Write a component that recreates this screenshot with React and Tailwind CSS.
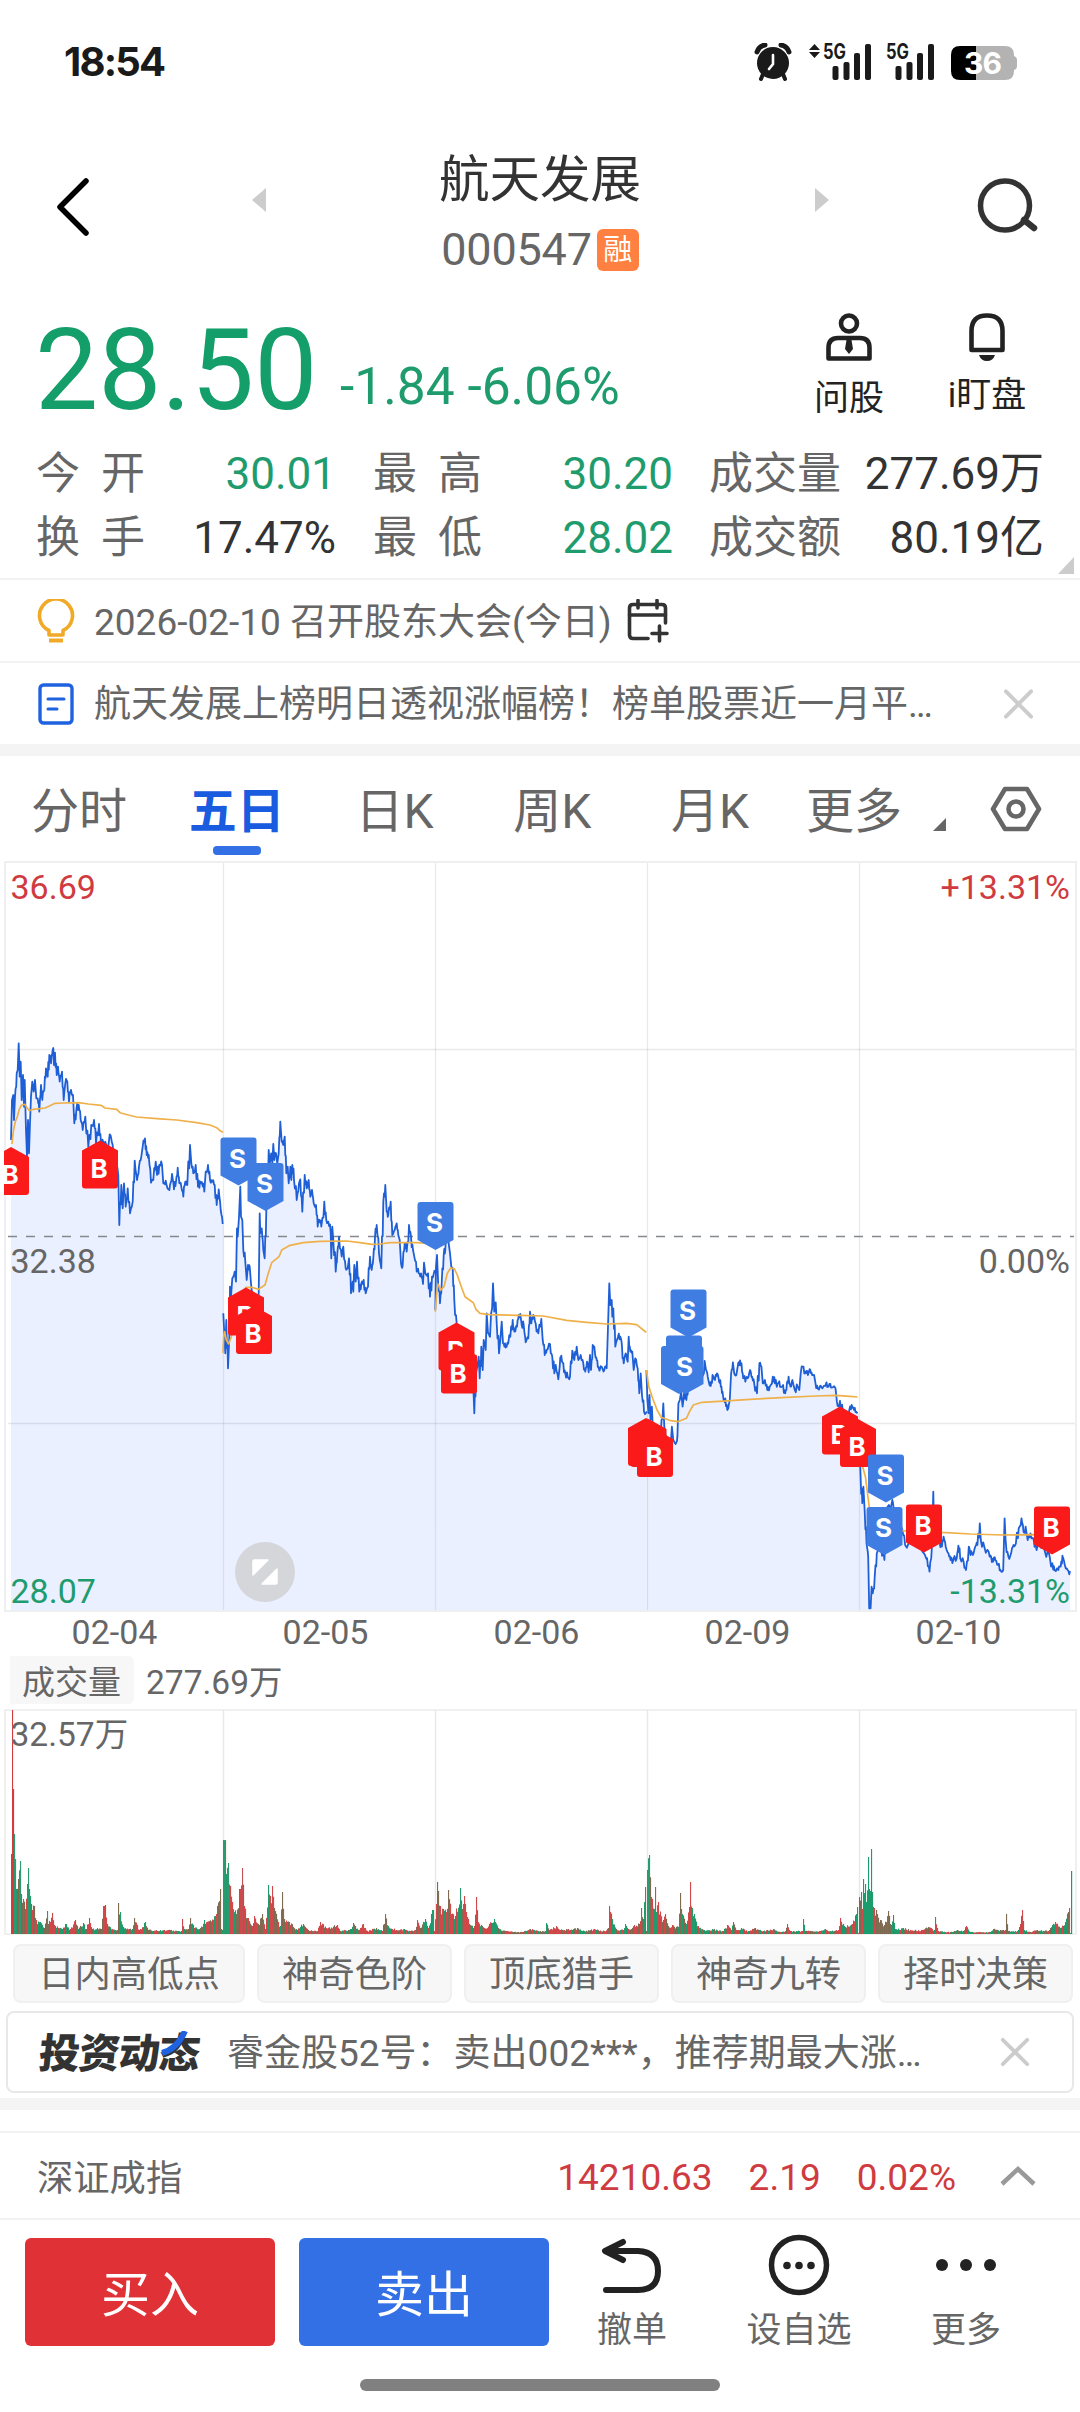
import React from 'react';

const GRID_X = [223.5, 435.5, 647.5, 859.5];

// Points are kept as "x,y" strings in magnified units, the origin is in chart px
const scaled = (str, ox, oy, kx = 3) =>
  str.trim().split(/\s+/).map((pair) => {
    const [x, y] = pair.split(',').map(Number);
    return [ox + x / kx, oy + y / 3];
  });

const PRICE = [
  scaled(
    `33,360 36,240 40,225 42,300 45,230 50,160 53,150 56,70 59,170 62,125 65,240 69,165 72,260 74,180 78,330 81,410
    84,300 87,400 90,310 93,230 97,185 101,215 105,180 109,235 113,235 118,275 123,195 127,240 133,210 138,145 143,170
    148,105 153,130 158,90 160,84 162,135 165,98 170,165 174,140 179,185 186,155 191,240 196,190 202,185 207,245
    213,210 219,225 223,310 229,270 236,255 242,300 248,330 256,290 265,380 274,315 282,300 288,370 297,312 303,370
    316,365 325,380 329,343 338,375 346,440 355,465 358,615 364,495 368,565 372,490 377,560 383,505 390,580 398,545
    404,422 411,480 417,440 424,410 428,380 435,355 440,405 446,405 453,488 460,480 467,425 471,465 478,435 486,435
    490,490 497,482 504,507 510,495 516,462 522,508 528,485 533,443 538,490 544,500 550,530 556,485 562,495 570,375
    574,430 580,460 587,435 594,500 600,485 606,487 613,515 617,455 624,435 630,480 637,485 644,495 650,555 656,508
    662,570 668,612`,
    0, 1020
  ),
  [
    ...scaled(
      `670,880 673,940 676,1000 679,900 684,1045 688,950 690,800 693,830 697,775 704,755 708,785 711,625 713,650
      717,590 721,500 723,590 727,600 730,690 736,725 740,780 744,735 749,740 753,790 758,830 768,870 776,820 779,580
      781,640 785,625 790,690 794,715 799,570 803,520 806,390 809,430 814,400 817,430 820,372 823,420 828,400 832,430
      836,400 841,305 845,365 850,375 854,350 859,460 863,440 866,490 871,440 874,480 877,435 882,480 890,540 897,490
      901,478 907,575 914,465 920,505 926,480 931,530 936,510 941,550 948,555 953,620 958,600 964,620 973,545 979,600
      985,605 992,640 994,715 997,620 1000,660 1007,755 1012,700 1017,650`,
      0, 1020
    ),
    ...scaled(
      `5,350 10,320 17,385 23,385 27,355 33,460 38,425 40,455 43,375 47,425 51,365 58,455 64,430 71,420 77,460 84,440
      90,350 95,390 100,355 105,290 110,255 117,340 124,385 130,185 136,135 140,215 145,225 152,185 157,285 164,270
      170,250 175,285 179,300 183,370 188,375 194,310 200,335 207,255 213,290 219,330 223,350 230,395 236,400 243,400
      249,432 252,368 256,400 264,400 270,470 276,410 284,390`,
      340, 1140
    ),
  ],
  scaled(
    `286,510 288,380 291,345 295,440 300,490 305,430 311,345 316,330 320,240 326,310 330,340 334,380 338,385 343,480
    350,550 360,640 375,690 390,700 400,740 403,820 408,700 412,680 416,650 419,715 424,620 428,690 431,600 437,630
    440,520 444,580 450,590 459,430 463,515 467,487 470,550 477,640 481,600 485,545 489,610 495,610 500,620 506,600
    511,590 518,540 523,575 531,560 536,525 541,522 545,555 551,555 557,607 565,595 570,515 574,550 580,525 587,550
    595,580 604,537 608,600 614,645 620,630 630,612 637,650 643,700 647,675 655,718 659,680 664,647 670,670 676,700
    683,710 690,710 697,632 703,660 710,620 715,660 722,645 730,670 736,695 741,665 746,697 750,645 753,690 758,615
    765,640 770,660 775,680 785,680 793,690 800,685 804,560 808,430 811,495 815,480 817,530 820,505 826,620 834,590
    841,590 846,620 851,670 857,640 863,665 866,590 871,635 877,635 881,690 886,655 893,685 898,760 902,700 906,765
    912,815 921,815`,
    340, 1140
  ),
  scaled(
    `309,510 312,600 315,640 318,585 321,660 325,620 329,720 339,760 350,720 358,610 361,680 373,760 383,680 387,720
    394,732 399,710 402,610 406,600 410,575 414,620 419,570 425,600 430,560 450,540 476,520 478,483 482,510 487,530
    491,550 496,558 501,525 508,540 514,520 520,545 525,560 530,575 533,600 538,595 544,630 551,600 555,520 560,487
    564,520 570,525 574,500 579,495 585,490 590,535 596,545 603,535 610,510 616,530 622,550 630,580 637,490 643,500
    647,550 653,540 660,570 667,560 676,530 682,550 690,550 697,560 706,555 712,580 717,550 722,530 727,560 733,540
    740,570 748,560 753,570 757,520 765,500 772,520 778,525 785,510 790,525 796,525 800,550 806,565 812,560 820,565
    832,547 838,560 845,563 858,565 862,605 868,620 871,603 880,640 890,655 898,630 905,615 912,630 918,635 922,640`,
    540, 1200, 2.9037
  ),
  scaled(
    `927,700 931,830 936,910 939,860 943,940 948,1030 953,1070 956,1225 960,1225 963,1160 966,1180 972,1130 978,1060
    990,1040 1000,1080 1005,1000 1009,920 1013,915 1018,920 1023,900 1028,930 1040,980 1052,990 1060,1035 1075,1030
    1090,1010 1105,1030 1118,1065 1124,1075 1131,1115 1138,1040 1142,875 1144,980 1150,1010 1160,1020 1167,1040
    1172,1010 1178,1040 1186,1060 1192,1080 1200,1080 1210,1075 1215,1037 1220,1075 1230,1085 1237,1110 1245,1040
    1250,1065 1257,1065 1264,1040 1270,1035 1277,970 1280,1020 1290,1040 1303,1055 1310,1070 1316,1085 1322,1080
    1330,1095 1337,1110 1345,1110 1349,955 1352,1020 1360,1070 1368,1060 1375,1035 1382,1030 1390,985 1398,955
    1404,995 1410,980 1416,1020 1424,1000 1433,1015 1442,1050 1450,1030 1465,1050 1480,1070 1484,1100 1488,1090
    1494,1110 1505,1110 1512,1100 1517,1067 1524,1095 1532,1110 1539,1113`,
    540, 1200, 2.9037
  ),
];

const AVERAGE = [
  scaled(
    `36,372 40,335 46,305 52,290 58,268 64,256 74,253 80,262 88,272 100,268 120,266 135,264 150,257 165,250 190,249
    235,248 265,252 303,256 315,264 350,268 360,278 385,285 410,291 470,296 530,300 590,308 630,315 650,323 660,332 669,337`,
    0, 1020
  ),
  scaled(
    `669,1000 671,950 674,935 679,960 686,972 694,950 705,900 720,830 738,802 755,802 775,808 795,795 805,760 815,728
    837,710 845,690 870,676 910,668 960,664 1040,663 1080,668 1115,673 1140,672 1170,668 1250,668 1304,672`,
    0, 1020
  ),
  scaled(
    `286,515 290,460 294,432 302,450 312,440 322,400 332,384 343,386 352,405 362,435 375,470 400,488 408,508 420,520
    450,524 540,526 610,528 680,541 740,547 800,552 860,550 890,554 910,570 919,577`,
    340, 1140
  ),
  scaled(
    `309,510 316,560 327,595 340,630 352,652 380,662 400,665 425,655 434,635 445,615 470,607 520,604 610,598 700,593
    800,588 860,586 900,589 922,591`,
    540, 1200, 2.9037
  ),
  scaled(
    `925,780 937,800 945,830 956,920 975,960 1010,980 1055,993 1115,990 1167,997 1250,1002 1345,1005 1433,1004 1539,1008`,
    540, 1200, 2.9037
  ),
];

// x,height pairs of the volume outline
const VOLUME = `11,80 12,224 13,145 14,100 15,75 16,45 18,55 20,73 21,40 23,35 25,25 27,50 28,66 29,45 31,30 34,28 36,14
  40,12 44,6 47,23 48,10 52,21 55,8 62,5 65,10 70,5 75,14 78,5 83,11 86,5 89,16 92,5 97,6 101,5 103,28 105,29 107,10
  112,5 117,4 118,31 120,22 123,7 132,5 134,16 139,4 145,12 148,4 160,4 170,4 178,3 181,3 182,15 184,5 188,5 190,16
  194,6 202,7 204,14 209,13 215,18 217,28 219,33 220,45 221,5 222,4 223,94 225,94 226,60 228,71 230,48 232,32 236,20
  239,45 240,45 242,66 244,28 248,16 252,8 254,18 258,10 262,20 265,5 268,49 270,38 272,48 274,26 278,12 280,8 282,42
  284,15 289,12 296,5 303,10 308,4 317,3 320,12 326,6 337,9 340,3 350,5 353,11 358,4 363,10 367,3 376,6 382,3 385,20
  388,8 396,4 404,5 410,3 415,4 417,14 420,6 425,15 428,6 431,20 433,24 434,3 436,30 437,52 438,43 440,28 443,25
  446,22 448,44 451,20 455,18 460,46 462,25 464,38 466,22 470,9 474,8 476,37 478,12 484,6 489,10 494,15 498,6 505,3
  520,2 530,5 540,3 545,3 546,11 549,4 556,8 562,4 577,6 584,3 594,5 604,3 608,6 609,28 612,15 616,5 623,4 625,10
  628,5 634,9 639,10 641,26 643,15 645,47 646,3 647,64 649,79 651,37 654,25 655,47 656,22 658,32 662,12 665,20 668,8
  672,9 678,7 680,41 682,20 686,10 689,27 690,52 692,26 694,20 698,8 704,4 712,5 722,3 727,9 731,4 733,12 736,4 741,6
  748,3 755,6 763,3 773,5 780,2 785,3 787,10 790,3 802,3 803,15 805,3 820,3 825,5 830,3 838,4 840,16 844,8 852,10
  856,20 857,27 858,1 859,37 861,42 862,25 863,55 865,50 866,32 868,77 869,45 870,43 871,85 872,42 874,26 877,20
  880,14 884,9 888,23 890,10 893,19 895,5 903,6 910,4 922,4 928,7 934,4 935,17 938,3 950,2 957,4 963,3 966,8 970,2
  990,2 993,5 1000,4 1005,4 1006,20 1008,3 1017,3 1020,10 1022,24 1024,4 1030,2 1037,4 1048,3 1052,9 1055,12 1060,6
  1065,12 1068,22 1069,26 1070,1 1071,63 1072,63`
  .trim()
  .split(/\s+/)
  .map((pair) => pair.split(',').map(Number));

const MARKERS = [
  { side: 'B', x: 11, y: 1147 },
  { side: 'B', x: 100, y: 1140.5 },
  { side: 'B', x: 246, y: 1287.5 },
  { side: 'B', x: 254, y: 1306 },
  { side: 'S', x: 238.5, y: 1137.5 },
  { side: 'S', x: 265.5, y: 1163 },
  { side: 'S', x: 435.5, y: 1202 },
  { side: 'B', x: 456.5, y: 1322.5 },
  { side: 'B', x: 459, y: 1345.5 },
  { side: 'B', x: 646, y: 1418, hidden: true },
  { side: 'B', x: 648.5, y: 1419 },
  { side: 'B', x: 655, y: 1429 },
  { side: 'S', x: 684, y: 1335.5 },
  { side: 'S', x: 688.5, y: 1289.5 },
  { side: 'S', x: 679, y: 1346, hidden: true },
  { side: 'S', x: 685.5, y: 1346 },
  { side: 'B', x: 840, y: 1406.5 },
  { side: 'B', x: 858, y: 1419 },
  { side: 'S', x: 886, y: 1454.5 },
  { side: 'S', x: 884.5, y: 1507 },
  { side: 'B', x: 924, y: 1504.5, down: true },
  { side: 'B', x: 1052, y: 1506.5, down: true },
];

const rand = (n) => {
  const v = Math.sin(n * 127.1) * 43758.5453;
  return v - Math.floor(v);
};

// minute ticks between the main points
const withTicks = (points) => {
  const out = [];
  points.forEach((p, i) => {
    out.push(p);
    const next = points[i + 1];
    if (next && next[0] - p[0] > 1.4) {
      const mid = (p[1] + next[1]) / 2;
      out.push([p[0] + (next[0] - p[0]) * 0.35, mid + (rand(p[0]) - 0.5) * 8]);
      out.push([p[0] + (next[0] - p[0]) * 0.7, mid + (rand(p[0] + 3) - 0.5) * 8]);
    }
  });
  return out;
};

const toPath = (points) => 'M' + points.map(([x, y]) => `${x.toFixed(1)} ${y.toFixed(1)}`).join('L');

const volumeBars = () => {
  const bars = [];
  for (let i = 0; i < VOLUME.length - 1; i++) {
    const [x0, h0] = VOLUME[i];
    const [x1, h1] = VOLUME[i + 1];
    for (let x = x0; x < x1; x++) {
      const h = h0 + ((h1 - h0) * (x - x0)) / (x1 - x0);
      bars.push([x, x === x0 ? h : h * (0.7 + rand(x) * 0.4)]);
    }
  }
  bars.push([1071, 63]);
  return bars;
};

const barColor = (x, h) => {
  if (x < 14) return '#d63a3e';
  if (x > 1069 || (x > 862 && x < 872)) return '#1a9c6c';
  if (h > 60) return x === 225 || x === 242 ? '#c25056' : '#2c9a70';
  const r = rand(x * 1.7);
  if (r < 0.4) return '#d0484a';
  if (r < 0.68) return '#1f9b6c';
  return '#7d6a50';
};

const Marker = ({ side, x, y, down, hidden }) => {
  const flip = side === 'S' || down;
  return (
    <g transform={`translate(${x} ${y})`}>
      <path
        d={
          flip
            ? 'M-15 0H15Q18 0 18 3V38L0 48L-18 38V3Q-18 0 -15 0Z'
            : 'M0 0L18 10V45Q18 48 15 48H-15Q-18 48 -18 45V10Z'
        }
        fill={side === 'S' ? '#407de3' : '#fa1a1a'}
      />
      {!hidden && (
        <text
          x="-1"
          y={flip ? 30 : 37}
          textAnchor="middle"
          fill="#fff"
          className="font-['Inter'] text-[26px] font-bold"
        >
          {side}
        </text>
      )}
    </g>
  );
};

const Signal = ({ arrows }) => (
  <div className="flex items-start">
    {arrows && (
      <svg className="mr-[3px] mt-[1px] h-[14px] w-[11px]" viewBox="0 0 11 14" fill="#1a1a1a">
        <path d="M5.5 0L11 6H0ZM5.5 14L11 8H0Z" />
      </svg>
    )}
    <svg className="-mt-[8px] h-[46px] w-[50px]" viewBox="0 -8 50 46" fill="#1a1a1a">
      <text x="0" y="16" textLength="23" lengthAdjust="spacingAndGlyphs" className="font-['Inter'] text-[21px] font-bold">
        5G
      </text>
      <rect x="9.5" y="23" width="6" height="14" rx="2" />
      <rect x="20.5" y="19" width="6" height="18" rx="2" />
      <rect x="31" y="10" width="6" height="27" rx="2" />
      <rect x="42" y="1" width="6" height="36" rx="2" />
    </svg>
  </div>
);

const StatusBar = () => (
  <div className="flex h-[125px] items-start justify-between pl-[64px] pr-[62px]">
    <span className="mt-[37px] font-['Inter'] text-[40px] font-bold leading-[50px] tracking-[-1.8px] text-[#1a1a1a]">
      18:54
    </span>
    <div className="mt-[43px] flex items-start">
      <svg className="mr-[17px] h-[38px] w-[38px]" viewBox="0 0 38 38" fill="none">
        <circle cx="19" cy="20" r="16" fill="#1a1a1a" />
        <path d="M3 9Q5 3 11 2M35 9Q33 3 27 2" stroke="#1a1a1a" strokeWidth="5" strokeLinecap="round" />
        <path d="M9 31L7 36M29 31L31 36" stroke="#1a1a1a" strokeWidth="4" strokeLinecap="round" />
        <path d="M19 12V21L15 26" stroke="#fff" strokeWidth="2.6" strokeLinecap="round" />
      </svg>
      <Signal arrows />
      <div className="w-[13px]" />
      <Signal />
      <svg className="ml-[15px] mt-[3px] h-[34px] w-[67px]" viewBox="0 0 67 34">
        <path d="M9 0H25V34H9Q0 34 0 25V9Q0 0 9 0Z" fill="#000" />
        <path d="M25 0H54Q63 0 63 9V10Q66 11 66 14V20Q66 23 63 24V25Q63 34 54 34H25Z" fill="#b3b3b3" />
        <text x="31.500" y="28" textAnchor="middle" fill="#fff" className="font-['Inter'] text-[30px] font-bold tracking-[-1px]">
          36
        </text>
      </svg>
    </div>
  </div>
);

const Header = () => (
  <div className="flex h-[165px] items-start pl-[54px] pr-[40px]">
    <svg className="mt-[50px] h-[64px] w-[38px]" viewBox="0 0 38 64" fill="none">
      <path d="M32 6L6 32L32 58" stroke="#000" strokeWidth="5.5" strokeLinecap="round" strokeLinejoin="round" />
    </svg>
    <svg className="ml-[159px] mt-[62px] h-[26px] w-[16px]" viewBox="0 0 16 26" fill="#ccc">
      <path d="M15 1V25L1 13Z" />
    </svg>
    <div className="ml-[113px] flex w-[320px] flex-col items-center">
      <h1 className="mt-[25px] text-[50.500px] leading-[60px] text-[#333]">航天发展</h1>
      <div className="mt-[12px] flex items-center gap-[5px]">
        <span className="text-[45px] leading-[56px] tracking-[-0.200px] text-[#666]">000547</span>
        <span className="flex h-[42px] w-[42px] items-center justify-center rounded-md bg-[#ff8040] text-[29px] leading-none text-white">
          融
        </span>
      </div>
    </div>
    <svg className="ml-[114px] mt-[62px] h-[26px] w-[16px]" viewBox="0 0 16 26" fill="#ccc">
      <path d="M1 1V25L15 13Z" />
    </svg>
    <svg className="ml-auto mt-[51px] h-[60px] w-[64px]" viewBox="0 0 64 60" fill="none" stroke="#333" strokeWidth="5.5">
      <circle cx="29" cy="29.500" r="24.500" />
      <path d="M48 44L58 52" strokeLinecap="round" strokeWidth="6.500" />
    </svg>
  </div>
);

const Stat = ({ label, value, color, spread }) => (
  <div className="flex items-center justify-between">
    <span className={spread ? 'flex w-[109px] justify-between text-[#666]' : '-ml-[1px] text-[#666]'}>
      {spread ? label.split('').map((c) => <span key={c}>{c}</span>) : label}
    </span>
    <span className={color}>{value}</span>
  </div>
);

const Quote = () => (
  <div className="h-[290px] border-b-2 border-[#f2f2f2]">
    <div className="flex h-[150px]">
      <span className="ml-[35px] mt-[11px] w-[305px] text-[112.500px] leading-[140px] text-[#149e6a]">28.50</span>
      <span className="mt-[65px] whitespace-pre text-[51.500px] leading-[64px] text-[#1f9c6e]">-1.84 -6.06%</span>
      <div className="ml-auto flex pr-[22px]">
        <div className="flex w-[134px] flex-col items-center">
          <svg className="mt-[22px] h-[50px] w-[48px]" viewBox="0 0 48 50" fill="none" stroke="#222" strokeWidth="4.600">
            <circle cx="24" cy="11.500" r="8" />
            <path d="M3.500 46.500V36Q3.500 26 13 26H35Q44.500 26 44.500 36V46.500Z" strokeLinejoin="round" />
            <path d="M21.500 28H26.500L28 37L24 42L20 37Z" fill="#222" stroke="none" />
          </svg>
          <span className="mt-[13px] text-[35px] leading-[48px] text-[#222]">问股</span>
        </div>
        <div className="flex w-[142px] flex-col items-center">
          <svg className="mt-[22px] h-[50px] w-[40px]" viewBox="0 0 40 50" fill="none">
            <path d="M4.500 38V19Q4.500 3.500 20 3.500T35.500 19V38Z" stroke="#222" strokeWidth="4.600" strokeLinejoin="round" />
            <path d="M12 43H28Q26 49 20 49T12 43Z" fill="#222" />
          </svg>
          <span className="mt-[10px] text-[35px] leading-[48px] text-[#222]">i盯盘</span>
        </div>
      </div>
    </div>
    <div className="relative grid grid-cols-[300px_300px_334px] gap-x-[37px] pl-[36px] pt-[3px] text-[44px] leading-[63.500px]">
      <Stat spread label="今开" value="30.01" color="text-[#1f9c6e]" />
      <Stat spread label="最高" value="30.20" color="text-[#1f9c6e]" />
      <Stat label="成交量" value="277.69万" color="text-[#333]" />
      <Stat spread label="换手" value="17.47%" color="text-[#333]" />
      <Stat spread label="最低" value="28.02" color="text-[#1f9c6e]" />
      <Stat label="成交额" value="80.19亿" color="text-[#333]" />
      <svg className="absolute right-[6px] top-[117px] h-[17px] w-[16px]" viewBox="0 0 16 17" fill="#ccc">
        <path d="M16 0V17H0Z" />
      </svg>
    </div>
  </div>
);

const CloseIcon = ({ className }) => (
  <svg className={className} viewBox="0 0 32 32" fill="none" stroke="#ccc" strokeWidth="4" strokeLinecap="round">
    <path d="M3 3L29 29M29 3L3 29" />
  </svg>
);

const Notices = () => (
  <div className="text-[37px] text-[#666]">
    <div className="flex h-[83px] items-center border-b-2 border-[#f2f2f2] pl-[37px]">
      <svg className="h-[44px] w-[38px]" viewBox="0 0 38 44" fill="none" stroke="#f0aa28" strokeWidth="3.600">
        <path d="M12 36V31.500A16.500 16.500 0 1 1 26 31.500V36Z" strokeLinejoin="round" />
        <path d="M12 41.500H26" strokeWidth="4" />
      </svg>
      <span className="ml-[19px] pt-[4px] leading-[50px]">2026-02-10 召开股东大会(今日)</span>
      <svg className="ml-[15px] h-[44px] w-[42px]" viewBox="0 0 42 44" fill="none" stroke="#333" strokeWidth="3.600" strokeLinecap="round">
        <path d="M21 39.500H6Q2.500 39.500 2.500 36V9Q2.500 5.500 6 5.500H35Q38.500 5.500 38.500 9V24" />
        <path d="M2.500 16H38.500M11 1.500V9M30 1.500V9M25 34.500H40M32.500 27V42" />
      </svg>
    </div>
    <div className="flex h-[81px] items-center pl-[38px]">
      <svg className="h-[42px] w-[36px]" viewBox="0 0 36 42" fill="none" stroke="#1e62e0" strokeWidth="3.400">
        <rect x="2" y="2" width="32" height="38" rx="3.500" />
        <path d="M10 16H26M10 26H19" strokeLinecap="round" strokeWidth="3" />
      </svg>
      <span className="ml-[20px] pt-[3px] leading-[50px]">航天发展上榜明日透视涨幅榜！榜单股票近一月平…</span>
      <CloseIcon className="ml-auto mr-[46px] h-[32px] w-[31px]" />
    </div>
    <div className="h-[12px] bg-[#f4f4f4]" />
  </div>
);

const Tabs = () => (
  <div className="flex h-[105px] items-start text-[48px] leading-[60px] text-[#666]">
    {['分时', '五日', '日K', '周K', '月K'].map((tab) => (
      <div key={tab} className="flex w-[157.800px] flex-col items-center pt-[26px]">
        {tab === '五日' ? (
          <>
            <span className="font-bold text-[#1a5ce0]">{tab}</span>
            <span className="mt-[4px] h-[9px] w-[48px] rounded-[4px] bg-[#3370e6]" />
          </>
        ) : (
          <span>{tab}</span>
        )}
      </div>
    ))}
    <span className="ml-[17px] mt-[26px]">更多</span>
    <svg className="ml-[31px] mt-[62px] h-[13px] w-[13px]" viewBox="0 0 13 13" fill="#666">
      <path d="M13 0V13H0Z" />
    </svg>
    <svg className="ml-[44px] mt-[29px] h-[48px] w-[52px]" viewBox="0 0 52 48" fill="none" stroke="#666" strokeWidth="4.600">
      <path d="M15 4H37L49 24L37 44H15L3 24Z" strokeLinejoin="round" />
      <circle cx="26" cy="24" r="7.500" />
    </svg>
  </div>
);

const PriceChart = () => (
  <svg className="block h-[751px] w-[1080px] text-[34px]" viewBox="0 861 1080 751" fill="none">
    {PRICE.map((session, i) => {
      const last = session[session.length - 1];
      const next = PRICE[i + 1];
      return (
        <path
          key={i}
          d={`${toPath(session)}L${next ? next[0][0] : 1070} ${last[1]}V1610H${session[0][0]}Z`}
          fill="#eaf0ff"
        />
      );
    })}
    <g stroke="#0a1020" strokeOpacity="0.090" strokeWidth="1.300">
      <path d="M8 1049.500H1075M8 1423.500H1075" />
      {GRID_X.map((x) => (
        <path key={x} d={`M${x} 862V1611`} />
      ))}
    </g>
    <rect x="5" y="862" width="1071" height="749" stroke="#eeeff1" strokeWidth="2" />
    <path d="M8 1236.500H1074" stroke="#85888c" strokeWidth="1.400" strokeDasharray="9 9" />
    {PRICE.map((session, i) => (
      <path key={i} d={toPath(withTicks(session))} stroke="#1f5fd6" strokeWidth="1.800" strokeLinejoin="round" />
    ))}
    {AVERAGE.map((session, i) => (
      <path key={i} d={toPath(session)} stroke="#efb04a" strokeWidth="1.700" strokeLinejoin="round" />
    ))}
    <circle cx="265" cy="1572" r="30" fill="#d5d6da" />
    <path
      d="M254 1560H268L253 1575V1561ZM277 1569V1583L276 1584H262Z"
      fill="#fff"
      stroke="#fff"
      strokeWidth="1.500"
      strokeLinejoin="round"
    />
    <text x="10.500" y="899" fill="#cf3b40">36.69</text>
    <text x="1070" y="899" textAnchor="end" fill="#cf3b40">+13.31%</text>
    <text x="10.500" y="1273" fill="#666">32.38</text>
    <text x="1070" y="1273" textAnchor="end" fill="#666">0.00%</text>
    <text x="10.500" y="1603" fill="#1f9c6e">28.07</text>
    <text x="1070" y="1603" textAnchor="end" fill="#1f9c6e">-13.31%</text>
    <clipPath id="plot">
      <rect x="4" y="861" width="1072" height="751" />
    </clipPath>
    <g clipPath="url(#plot)">
      {MARKERS.map((m, i) => (
        <Marker key={i} {...m} />
      ))}
    </g>
  </svg>
);

const VolumeChart = () => (
  <svg className="block h-[226px] w-[1080px] text-[34px]" viewBox="0 1709 1080 226" fill="none">
    <rect x="5" y="1710" width="1071" height="224" stroke="#f0f0f0" strokeWidth="2" />
    {GRID_X.map((x) => (
      <path key={x} d={`M${x} 1710V1934`} stroke="#e8e8ea" strokeWidth="1.500" />
    ))}
    {volumeBars().map(([x, h], i) => (
      <rect key={i} x={x} y={1934 - h} width="1.100" height={h} fill={barColor(x, h)} />
    ))}
    <text x="10.500" y="1745.500" fill="#666" className="text-[33.500px]">32.57万</text>
  </svg>
);

const Charts = () => (
  <div className="text-[#666]">
    <PriceChart />
    <div className="flex h-[44px] pl-[9px] text-[34px] leading-[40px]">
      {['02-04', '02-05', '02-06', '02-09', '02-10'].map((d) => (
        <span key={d} className="w-[211px] text-center">{d}</span>
      ))}
    </div>
    <div className="flex h-[53px] items-start pl-[10px] text-[33.500px]">
      <span className="h-[48px] w-[124px] rounded-r-md bg-[#f7f7f7] pl-[12px] text-[33px] leading-[53px]">
        成交量
      </span>
      <span className="ml-[12px] leading-[53px]">277.69万</span>
    </div>
    <VolumeChart />
  </div>
);

const Tools = () => (
  <div className="flex h-[76px] gap-[12px] pl-[13px] pr-[7px] pt-[9px] text-[36.300px] leading-[57px] text-[#666]">
    <span className="h-[59px] w-[232px] rounded-lg border-2 border-[#f0f0f0] bg-[#f7f7f7] text-center">日内高低点</span>
    {['神奇色阶', '顶底猎手', '神奇九转', '择时决策'].map((t) => (
      <span key={t} className="h-[59px] flex-1 rounded-lg border-2 border-[#f0f0f0] bg-[#f7f7f7] text-center">
        {t}
      </span>
    ))}
  </div>
);

const Feed = () => (
  <div className="mx-[6px] mb-[5px] flex h-[82px] items-center rounded-lg border-2 border-[#e8e8e8] pl-[31px] pr-[42px]">
    <div className="relative h-[44px] w-[164px] pt-[2px]">
      <span className="block -skew-x-6 whitespace-nowrap text-[41px] font-black leading-[44px] tracking-[-1px] text-[#333]">
        投资动态
      </span>
      <svg className="absolute left-[121px] top-[1px] h-[26px] w-[30px]" viewBox="0 0 30 26" fill="none">
        <path d="M25 0Q17 18 2 22" stroke="#1e62e0" strokeWidth="6" />
      </svg>
    </div>
    <span className="ml-[24px] pt-[4px] text-[37px] leading-[50px] text-[#666]">睿金股52号：卖出002***，推荐期最大涨…</span>
    <CloseIcon className="ml-auto h-[30px] w-[30px]" />
  </div>
);

const IndexRow = () => (
  <>
    <div className="h-[12px] bg-[#f4f4f4]" />
    <div className="h-[23px] border-b-2 border-[#f2f2f2]" />
    <div className="flex h-[87px] items-center border-b-2 border-[#f2f2f2] pl-[37px] pr-[42px]">
      <span className="pt-[6px] text-[36.300px] leading-[50px] text-[#666]">深证成指</span>
      <div className="ml-auto flex gap-[36px] pt-[5px] text-[37px] leading-[50px] text-[#cf3b40]">
        <span>14210.63</span>
        <span>2.19</span>
        <span>0.02%</span>
      </div>
      <svg className="ml-[42px] h-[24px] w-[40px]" viewBox="0 0 40 24" fill="none">
        <path d="M4 20L20 5L36 20" stroke="#999" strokeWidth="4.500" />
      </svg>
    </div>
  </>
);

const BottomBar = () => (
  <div className="flex h-[192px] flex-col">
    <div className="flex h-[134px] pl-[25px] pt-[18px]">
      <button className="h-[108px] w-[250px] rounded-md bg-[#e03136] pt-[7px] text-[49px] text-white">买入</button>
      <button className="ml-[24px] h-[108px] w-[250px] rounded-md bg-[#3370e6] pt-[7px] text-[49px] text-white">卖出</button>
      <div className="flex text-[35px] leading-[46px] text-[#666]">
        <div className="flex w-[166px] flex-col items-center">
          <svg className="h-[58px] w-[62px]" viewBox="0 0 62 58" fill="none" stroke="#222" strokeWidth="6" strokeLinecap="round" strokeLinejoin="round">
            <path d="M22 4L4 13L22 22" />
            <path d="M6 13H37Q57 14 57 33T37 52H5" />
          </svg>
          <span className="mt-[12px]">撤单</span>
        </div>
        <div className="-mt-[4px] ml-[1px] flex w-[166px] flex-col items-center">
          <svg className="h-[62px] w-[62px]" viewBox="0 0 62 62" fill="none">
            <circle cx="31" cy="31" r="27.500" stroke="#222" strokeWidth="5.500" />
            <g fill="#222">
              <circle cx="19" cy="31.500" r="3.800" />
              <circle cx="31" cy="31.500" r="3.800" />
              <circle cx="43" cy="31.500" r="3.800" />
            </g>
          </svg>
          <span className="mt-[12px]">设自选</span>
        </div>
        <div className="ml-[1px] flex w-[166px] flex-col items-center">
          <svg className="h-[58px] w-[62px]" viewBox="0 0 62 58" fill="#222">
            <circle cx="7" cy="27" r="6" />
            <circle cx="31" cy="27" r="6" />
            <circle cx="55" cy="27" r="6" />
          </svg>
          <span className="mt-[12px]">更多</span>
        </div>
      </div>
    </div>
    <div className="mx-auto mt-[25px] h-[12px] w-[360px] rounded-full bg-[#808080]" />
  </div>
);

const App = () => (
  <div className="h-[2412px] w-[1080px] overflow-hidden bg-white font-['Roboto','Noto_Sans_CJK_SC',sans-serif]">
    <StatusBar />
    <Header />
    <Quote />
    <Notices />
    <Tabs />
    <Charts />
    <Tools />
    <Feed />
    <IndexRow />
    <BottomBar />
  </div>
);

export default App;
